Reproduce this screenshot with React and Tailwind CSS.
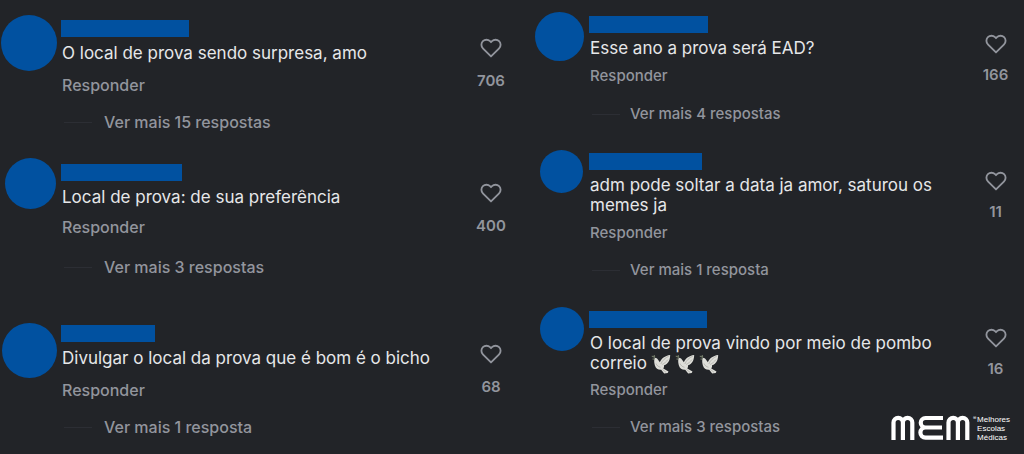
import React from "react";
import { FiHeart } from "react-icons/fi";

/* ===== COMMENTS ===== */
const leftComments = [
  {
    text: "O local de prova sendo surpresa, amo",
    more: "Ver mais 15 respostas",
    likes: 706,
    gap: "mt-[15px]",
    avatar: "size-14 mr-[3px]",
    name: "mt-[5px] w-32",
    reply: "mt-2.5 mb-[17px]",
    like: "pt-[23px]",
  },
  {
    text: "Local de prova: de sua preferência",
    more: "Ver mais 3 respostas",
    likes: 400,
    gap: "mt-[26px]",
    avatar: "size-[51px]",
    name: "mt-1.5 w-[121px]",
    reply: "mt-2 mb-5",
    like: "pt-[25px]",
  },
  {
    text: "Divulgar o local da prova que é bom é o bicho",
    more: "Ver mais 1 resposta",
    likes: 68,
    gap: "mt-[46px]",
    avatar: "size-[55px] mr-0.5",
    name: "mt-0.5 w-[94px]",
    reply: "mt-2.5 mb-[17px]",
    like: "pt-[21px]",
  },
];

const rightComments = [
  {
    text: "Esse ano a prova será EAD?",
    more: "Ver mais 4 respostas",
    likes: 166,
    gap: "mt-3",
    avatar: "size-[49px] mr-1",
    name: "mt-1 w-[119px]",
    reply: "mt-2 mb-[18px]",
    like: "pt-[22px]",
  },
  {
    text: "adm pode soltar a data ja amor, saturou os memes ja",
    more: "Ver mais 1 resposta",
    likes: 11,
    gap: "mt-[26px]",
    avatar: "size-[43px]",
    name: "mt-[3px] w-[113px]",
    reply: "mt-2 mb-[17px]",
    like: "pt-[21px]",
  },
  {
    text: "O local de prova vindo por meio de pombo correio",
    doves: 3,
    more: "Ver mais 3 respostas",
    likes: 16,
    gap: "mt-[27px]",
    avatar: "size-11",
    name: "mt-1 w-[118px]",
    reply: "mt-[7px] mb-[17px]",
    like: "pt-[21px]",
  },
];

function Dove() {
  return (
    <svg
      viewBox="0 0 20 20"
      role="img"
      aria-label="pomba"
      className="-my-2 ml-1 inline-block size-5 align-middle"
    >
      <path
        d="M.8 2.500C2 2.300 3 2.800 4 4M1.500 5.200l2.300-.4M3.200 1.200l.5 2.600"
        stroke="#6d7564"
        strokeWidth="1.3"
        fill="none"
      />
      <path
        d="M3.600 4.400c.9-.8 2-.6 2.700.3l2.600 3.500C10.200 4.600 13.800 1.700 19.200 1c-.1 3.600-.9 6.700-3.300 8.700-.9.800-1.800 1.300-2.800 1.600.1 1.300-.2 2.300-.8 3.200l5.200 3-.8 1.500-3.500.6-3-3.900c-3.200.2-5.300-1.200-6.200-4C3.300 9.500 2.800 6.400 3.600 4.400z"
        fill="#deded9"
      />
      <path
        d="M9.800 10c1.700-3.700 4.300-6.200 8-7.800M11.200 10.500c2.300-1.200 4.200-2.800 5.800-5M11.500 15.500l3.500 2.800M5 9.500c.8 2 2.300 3.200 4.500 3.800"
        stroke="#a9a9a4"
        strokeWidth=".7"
        fill="none"
      />
    </svg>
  );
}

function Comment({ item, large }) {
  return (
    <article className={`flex items-start ${item.gap}`}>
      <div
        className={`flex shrink-0 justify-center ${
          large ? "w-[61px]" : "w-[59px] pl-1"
        }`}
      >
        <div className={`shrink-0 rounded-full bg-[#0151a0] ${item.avatar}`} />
      </div>

      <div className="min-w-0 flex-1">
        <div className={`h-[17px] bg-[#0151a0] ${item.name}`} />
        <div className="pl-px">
          <p
            className={`text-[17px] text-[#e6e7e9] ${
              large ? "mt-1 leading-6" : "mt-[5px] leading-5"
            }`}
          >
            {item.text}
            {item.doves &&
              Array.from({ length: item.doves }, (_, i) => <Dove key={i} />)}
          </p>
          <button
            className={`block font-medium leading-5 ${item.reply} ${
              large ? "text-[16px]" : "text-[15px]"
            }`}
          >
            Responder
          </button>
          <button
            className={`flex items-center font-medium leading-5 ${
              large ? "gap-3 text-[16px]" : "gap-2.5 text-[15px]"
            }`}
          >
            <span className="ml-0.5 h-px w-7 bg-[#2c2e34]" />
            {item.more}
          </button>
        </div>
      </div>

      <button
        aria-label={`Curtir, ${item.likes}`}
        className={`flex shrink-0 flex-col items-center text-[15px] font-semibold leading-5 ${item.like} ${
          large ? "w-[78px] gap-[13px]" : "w-[57px] gap-[11px]"
        }`}
      >
        <FiHeart size={22} strokeWidth={2} className="-my-px" />
        <span>{item.likes}</span>
      </button>
    </article>
  );
}

function Brand() {
  return (
    <div className="absolute right-3.5 bottom-3 flex items-start text-white">
      <svg
        viewBox="0 0 80 25"
        className="h-[25px] w-20"
        fill="none"
        stroke="currentColor"
        strokeWidth="4.2"
        aria-label="MEM"
        role="img"
      >
        <path d="M2.500 25V7.500a4.700 4.700 0 0 1 9.400 0V25M11.900 25V7.500a4.700 4.700 0 0 1 9.400 0V25" />
        <path d="M52 3H34.500a4.600 4.600 0 0 0 0 9.500H51M34.500 12.500a4.600 4.600 0 0 0 0 10.200H52" />
        <path d="M57.500 25V7.500a4.700 4.700 0 0 1 9.400 0V25M66.900 25V7.500a4.700 4.700 0 0 1 9.400 0V25" />
      </svg>
      <span className="ml-0.5 w-1 text-[5px] leading-[6px]">®</span>
      <p className="font-['Liberation_Sans',sans-serif] text-[8px] leading-[9px]">
        Melhores
        <br />
        Escolas
        <br />
        Médicas
      </p>
    </div>
  );
}

export default function App() {
  return (
    <main className="relative grid min-h-screen grid-cols-[530fr_494fr] bg-[#222428] font-['Inter',sans-serif] text-[#92959d]">
      <section className="flex flex-col">
        {leftComments.map((item) => (
          <Comment key={item.text} item={item} large />
        ))}
      </section>
      <section className="flex flex-col">
        {rightComments.map((item) => (
          <Comment key={item.text} item={item} />
        ))}
      </section>
      <Brand />
    </main>
  );
}
